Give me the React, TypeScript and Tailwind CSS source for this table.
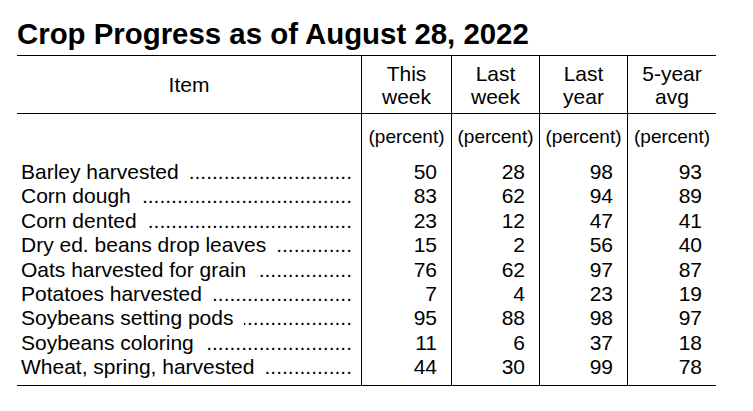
import React from "react"

const rows = [
  { item: "Barley harvested", vals: [50, 28, 98, 93] },
  { item: "Corn dough", vals: [83, 62, 94, 89] },
  { item: "Corn dented", vals: [23, 12, 47, 41] },
  { item: "Dry ed. beans drop leaves", vals: [15, 2, 56, 40] },
  { item: "Oats harvested for grain", vals: [76, 62, 97, 87] },
  { item: "Potatoes harvested", vals: [7, 4, 23, 19] },
  { item: "Soybeans setting pods", vals: [95, 88, 98, 97] },
  { item: "Soybeans coloring", vals: [11, 6, 37, 18] },
  { item: "Wheat, spring, harvested", vals: [44, 30, 99, 78] },
]

const heads = [
  ["This", "week"],
  ["Last", "week"],
  ["Last", "year"],
  ["5-year", "avg"],
]

const DOTS = ".".repeat(80)

export default function App() {
  return (
    <div className="min-h-screen bg-white text-black font-['Liberation_Sans',Arial,sans-serif] pl-[17px] pt-4">
      <h1 className="text-[29.4px] leading-[36px] font-bold mb-[3px]">Crop Progress as of August 28, 2022</h1>

      <div className="w-[699px] border-t border-b border-black">
        {/* header */}
        <div className="grid grid-cols-[344px_90px_88px_88px_89px] h-[58px] border-b border-black text-[21px] leading-[23px]">
          <div className="flex items-center justify-center">Item</div>
          {heads.map((h, i) => (
            <div key={i} className="border-l border-black flex flex-col items-center justify-center">
              <span>{h[0]}</span>
              <span>{h[1]}</span>
            </div>
          ))}
        </div>

        {/* body */}
        <div className="grid grid-cols-[344px_90px_88px_88px_89px] pt-[11px] pb-[5px] text-[21px] leading-[24.4px]">
          <div className="pl-[4px] pr-[9px]">
            <div className="h-[24px] mb-[11px]" />
            {rows.map((r) => (
              <div key={r.item} className="flex whitespace-nowrap">
                <span>{r.item}</span>
                <span className="flex-1 min-w-0 ml-[11px] flex justify-end overflow-hidden">
                  <span>{DOTS}</span>
                </span>
              </div>
            ))}
          </div>
          {heads.map((_, c) => (
            <div key={c} className="border-l border-black -mt-[11px] pt-[11px] -mb-[5px] pb-[5px]">
              <div className="h-[24px] mb-[11px] text-[19px] leading-[24px] text-center">(percent)</div>
              {rows.map((r) => (
                <div key={r.item} className="text-right pr-[14px]">
                  {r.vals[c]}
                </div>
              ))}
            </div>
          ))}
        </div>
      </div>
    </div>
  )
}
